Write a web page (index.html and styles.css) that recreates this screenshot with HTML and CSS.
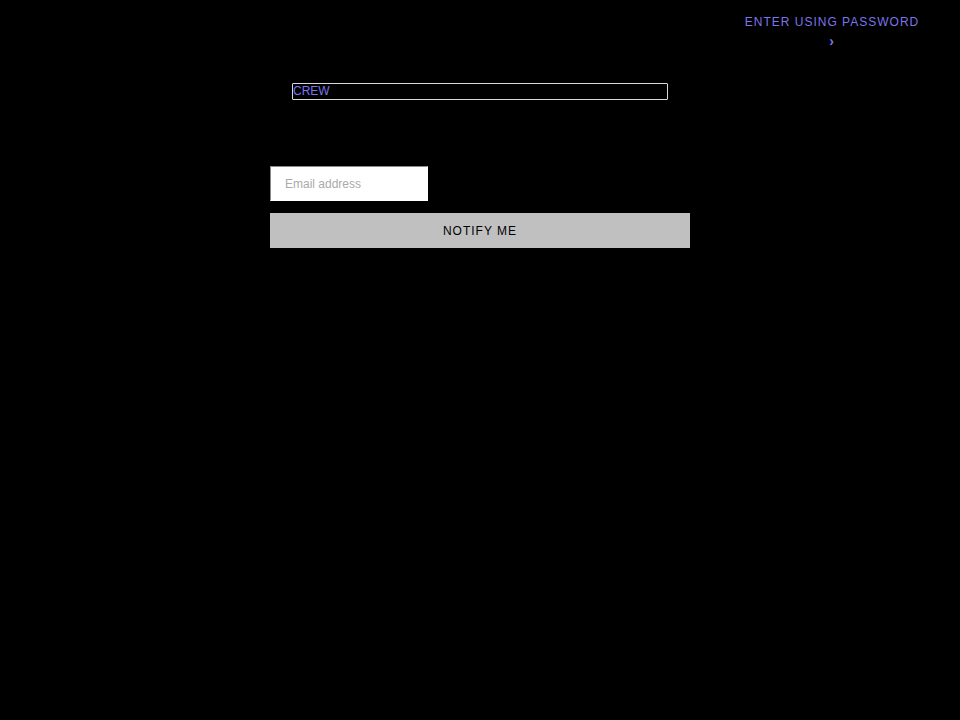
FILE: index.html
```html
<!doctype html>
<html lang="en">
<head>
<meta charset="utf-8">
<title>CREW</title>
<link rel="stylesheet" href="styles.css">
</head>
<body>

<div class="login">
	<a href="#password" class="login-link">Enter using password <span class="icon">›</span></a>
</div>

<div class="wrapper">
	<h1 class="shop-name"><a href="#">CREW</a></h1>
	<form class="signup" action="#">
		<input type="email" name="email" placeholder="Email address" aria-label="Email address">
		<button type="submit">Notify me</button>
	</form>
</div>

</body>
</html>
```

FILE: styles.css
```css
*{box-sizing:border-box;}
body{
	margin:0;
	background:#000;
	color:#fff;
	font:12px/19px "Liberation Sans",Arial,sans-serif;
}
a{color:#7b74ea;text-decoration:none;}

.login{display:flex;justify-content:flex-end;padding:13px 36px 0;}
.login-link{
	width:184px;
	text-align:center;
	text-transform:uppercase;
	letter-spacing:1px;
}
.icon{display:block;font-size:14px;font-weight:bold;}

.wrapper{width:100%;max-width:420px;margin:32px auto 0;}
.shop-name{margin:0 22px;font-size:12px;line-height:15px;font-weight:normal;}
.shop-name a{display:block;border:1px solid #d8d8d8;border-radius:1px;}

.signup{margin-top:66px;}
.signup input{
	display:block;
	width:158px;
	height:35px;
	padding:0 14px;
	border:1px solid #fff;
	border-top-color:#8a8a8a;
	border-left-color:#8a8a8a;
	background:#fff;
	font:12px "Liberation Sans",Arial,sans-serif;
}
.signup input::placeholder{color:#aaa;}
.signup button{
	display:block;
	width:100%;
	height:35px;
	margin-top:12px;
	border:0;
	background:#c0c0c0;
	color:#000;
	font:12px "Liberation Sans",Arial,sans-serif;
	letter-spacing:1px;
	text-transform:uppercase;
}
```
